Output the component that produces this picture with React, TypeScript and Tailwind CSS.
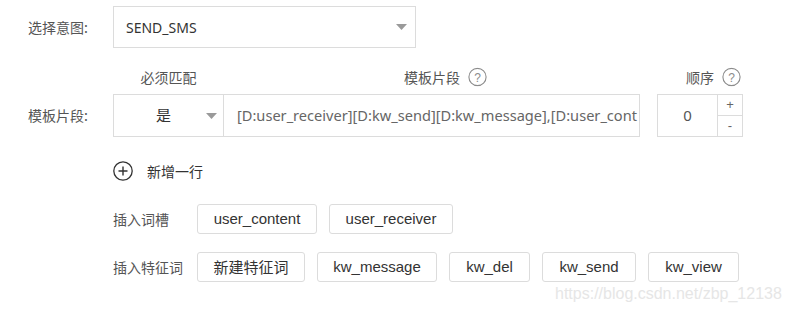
const cjk = "font-['Noto_Sans_CJK_SC',sans-serif]";
const latin = "font-['Liberation_Sans','Noto_Sans_CJK_SC',sans-serif]";
const inputFont = "font-['Noto_Sans','Noto_Sans_CJK_SC',sans-serif]";

function Caret() {
  return (
    <svg width="11" height="6" viewBox="0 0 11 6" className="shrink-0">
      <path d="M0 0 L11 0 L5.5 6 Z" fill="#9a9a9a" />
    </svg>
  );
}

function Help() {
  return (
    <svg width="19" height="19" viewBox="0 0 19 19" className="absolute left-full top-1/2 ml-[8px] -translate-y-1/2">
      <circle cx="9.5" cy="9.5" r="8.6" fill="none" stroke="#8c8c8c" strokeWidth="1.1" />
      <text x="9.5" y="14" textAnchor="middle" fontSize="12" fill="#8c8c8c" fontFamily="Liberation Sans, sans-serif">?</text>
    </svg>
  );
}

function Tag({ label, w }: { label: string; w: string }) {
  return (
    <div className={`${w} h-[30px] border border-[#dcdcdc] rounded-[3px] flex items-center justify-center text-[15px] text-[#333] ${latin}`}>
      {label}
    </div>
  );
}

export default function App() {
  return (
    <div className={`relative w-[789px] h-[311px] bg-white overflow-hidden ${cjk}`}>
      {/* 选择意图 */}
      <div className="flex items-center pt-[6px]">
        <div className="w-[113px] pl-[28px] text-[14px] text-[#555]">选择意图:</div>
        <div className="w-[303px] h-[42px] border border-[#dcdcdc] flex items-center justify-between pl-[12px] pr-[8px]">
          <span className={`text-[14px] text-[#333] ${inputFont}`}>SEND_SMS</span>
          <Caret />
        </div>
      </div>

      {/* column headers */}
      <div className="flex items-center mt-[19px] h-[20px] text-[14px] text-[#555]">
        <div className="w-[113px]" />
        <div className="w-[111px] flex justify-center">必须匹配</div>
        <div className="w-[416px] flex justify-center">
          <span className="relative">模板片段<Help /></span>
        </div>
        <div className="w-[17px]" />
        <div className="w-[86px] flex justify-center">
          <span className="relative">顺序<Help /></span>
        </div>
      </div>

      {/* 模板片段 row */}
      <div className="flex items-center mt-[7px]">
        <div className="w-[113px] pl-[28px] text-[14px] text-[#555]">模板片段:</div>
        <div className="flex h-[43px] border border-[#dcdcdc] w-[527px]">
          <div className="w-[110px] border-r border-[#dcdcdc] flex items-center pl-[42px] pr-[6px] justify-between">
            <span className="text-[15px] text-[#333]">是</span>
            <Caret />
          </div>
          <div className={`flex-1 min-w-0 overflow-hidden whitespace-nowrap flex items-center pl-[13px] text-[14.6px] text-[#666] ${inputFont}`}>
            [D:user_receiver][D:kw_send][D:kw_message],[D:user_cont
          </div>
        </div>
        <div className="ml-[17px] w-[86px] h-[43px] border border-[#dcdcdc] flex">
          <div className={`flex-1 flex items-center justify-center text-[15px] text-[#555] ${inputFont}`}>0</div>
          <div className="w-[25px] border-l border-[#dcdcdc] flex flex-col text-[#666]">
            <div className={`flex-1 border-b border-[#dcdcdc] flex items-center justify-center text-[13px] ${latin}`}>+</div>
            <div className={`flex-1 flex items-center justify-center text-[13px] ${latin}`}>-</div>
          </div>
        </div>
      </div>

      {/* 新增一行 */}
      <div className="flex items-center mt-[23px] pl-[113px] h-[22px]">
        <svg width="20" height="20" viewBox="0 0 20 20">
          <circle cx="10" cy="10" r="9.2" fill="none" stroke="#333" strokeWidth="1.3" />
          <path d="M10 5.5 V14.5 M5.5 10 H14.5" stroke="#333" strokeWidth="1.4" />
        </svg>
        <span className="ml-[14px] text-[14px] text-[#333]">新增一行</span>
      </div>

      {/* 插入词槽 */}
      <div className="flex items-center mt-[22px] pl-[113px] gap-[12px]">
        <div className="w-[72px] text-[14px] text-[#555]">插入词槽</div>
        <Tag label="user_content" w="w-[120px]" />
        <Tag label="user_receiver" w="w-[124px]" />
      </div>

      {/* 插入特征词 */}
      <div className="flex items-center mt-[18px] pl-[113px] gap-[12px]">
        <div className="w-[72px] text-[14px] text-[#555]">插入特征词</div>
        <div className={`w-[108px] h-[30px] border border-[#dcdcdc] rounded-[3px] flex items-center justify-center text-[15px] text-[#333] ${cjk}`}>新建特征词</div>
        <Tag label="kw_message" w="w-[120px]" />
        <Tag label="kw_del" w="w-[81px]" />
        <Tag label="kw_send" w="w-[94px]" />
        <Tag label="kw_view" w="w-[91px]" />
      </div>

      {/* watermark */}
      <div className={`absolute left-[555px] top-[282px] text-[16px] text-[#e6e6e6] whitespace-nowrap ${latin}`}>
        https://blog.csdn.net/zbp_12138
      </div>
    </div>
  );
}
